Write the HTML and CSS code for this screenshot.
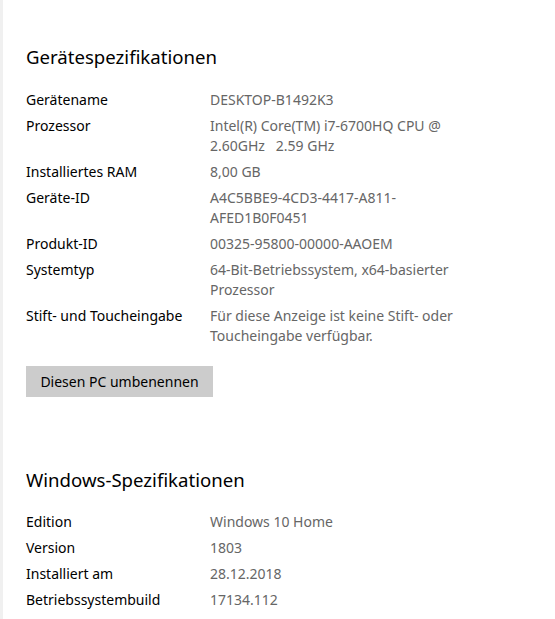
FILE: index.html
```html
<!DOCTYPE html>
<html lang="de">
<head>
<meta charset="utf-8">
<link rel="stylesheet" href="styles.css">
</head>
<body>
<div class="page">
  <section class="section first">
    <h2 class="title">Gerätespezifikationen</h2>
    <div class="specs">
      <div class="label">Gerätename</div><div class="value">DESKTOP-B1492K3</div>
      <div class="label">Prozessor</div><div class="value">Intel(R) Core(TM) i7-6700HQ CPU @<br>2.60GHz&nbsp;&nbsp;&nbsp;2.59 GHz</div>
      <div class="label">Installiertes RAM</div><div class="value">8,00 GB</div>
      <div class="label">Geräte-ID</div><div class="value">A4C5BBE9-4CD3-4417-A811-<br>AFED1B0F0451</div>
      <div class="label">Produkt-ID</div><div class="value">00325-95800-00000-AAOEM</div>
      <div class="label">Systemtyp</div><div class="value">64-Bit-Betriebssystem, x64-basierter<br>Prozessor</div>
      <div class="label">Stift- und Toucheingabe</div><div class="value">Für diese Anzeige ist keine Stift- oder<br>Toucheingabe verfügbar.</div>
    </div>
    <button class="btn">Diesen PC umbenennen</button>
  </section>
  <section class="section second">
    <h2 class="title">Windows-Spezifikationen</h2>
    <div class="specs">
      <div class="label">Edition</div><div class="value">Windows 10 Home</div>
      <div class="label">Version</div><div class="value">1803</div>
      <div class="label">Installiert am</div><div class="value">28.12.2018</div>
      <div class="label">Betriebssystembuild</div><div class="value">17134.112</div>
    </div>
  </section>
</div>
</body>
</html>
```

FILE: styles.css
```css
html, body {
  margin: 0;
  padding: 0;
  background: #ffffff;
  height: 100%;
  overflow: hidden;
}
body {
  font-family: "Noto Sans", "Open Sans", sans-serif;
  font-size: 14px;
  color: #000;
}
.page {
  border-left: 3px solid #f0f0f0;
  min-height: 100%;
  box-sizing: border-box;
  padding-left: 23px;
}
.section.first {
  padding-top: 43px;
}
.section.second {
  padding-top: 69px;
}
.title {
  margin: 0;
  font-weight: 400;
  font-size: 18.6px;
  line-height: 28px;
}
.specs {
  display: grid;
  grid-template-columns: 184px 270px;
  row-gap: 6px;
  margin-top: 19px;
  line-height: 20px;
}
.second .specs {
  margin-top: 18px;
}
.value {
  color: #666;
}
.btn {
  margin-top: 20px;
  font-family: inherit;
  font-size: 14px;
  color: #000;
  background: #cccccc;
  border: none;
  width: 187px;
  height: 31px;
  padding: 0;
  display: block;
}
```
